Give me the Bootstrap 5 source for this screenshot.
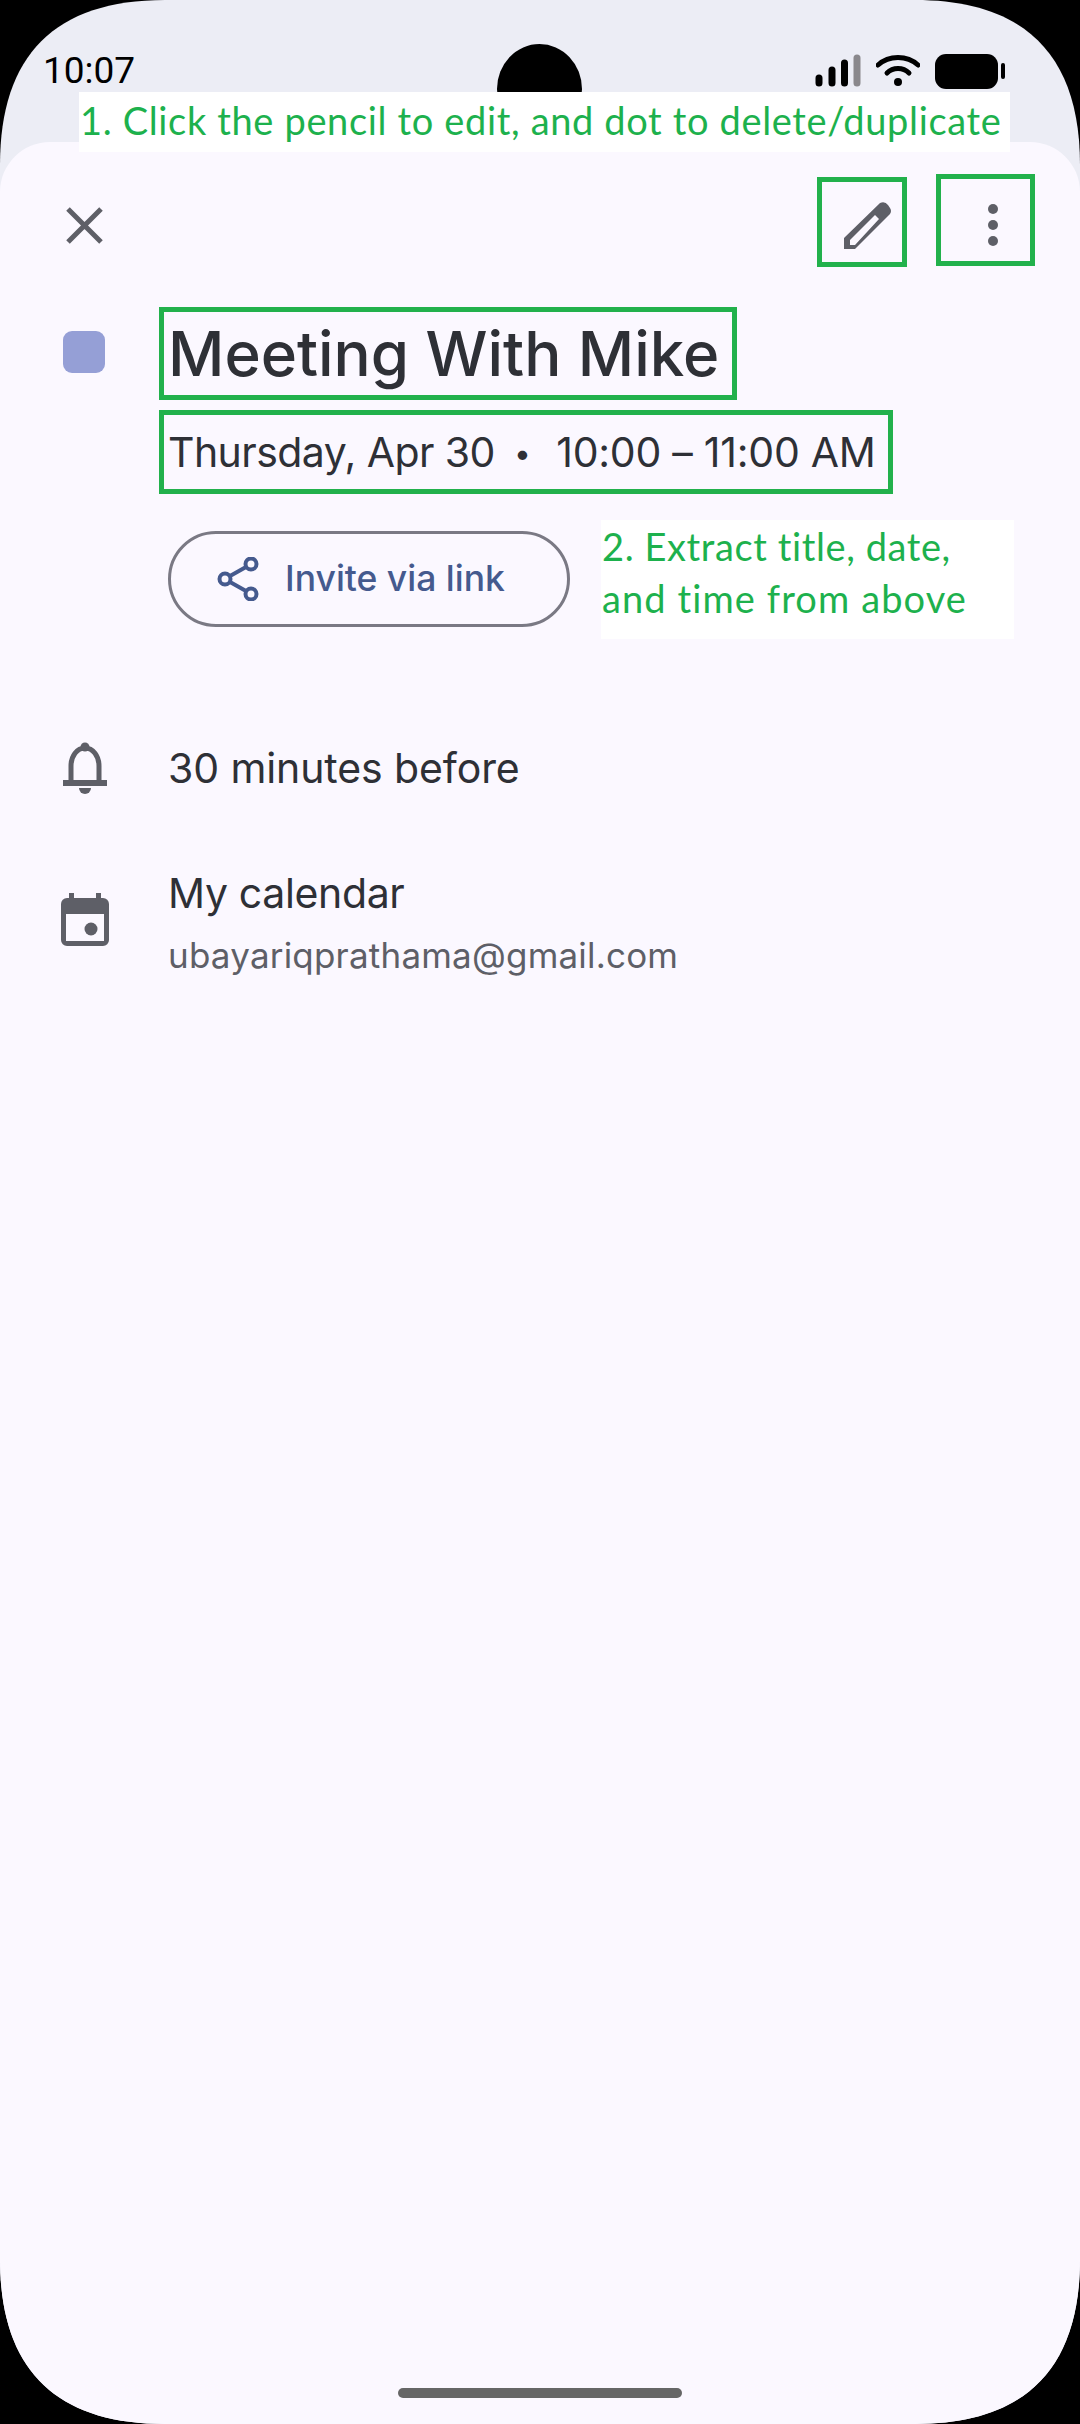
<!DOCTYPE html>
<html lang="en"><head><meta charset="utf-8"><title>Event details</title>
<link href="https://cdn.jsdelivr.net/npm/bootstrap@5.3.0/dist/css/bootstrap.min.css" rel="stylesheet">
<style>
html,body{margin:0;background:#000;width:1080px;height:2424px;overflow:hidden}
.phone{width:1080px;height:2424px;background:#ecedf5;clip-path:path("M165 0H915C1025 0 1080 55 1080 165V2259C1080 2369 1025 2424 915 2424H165C55 2424 0 2369 0 2259V165C0 55 55 0 165 0Z");overflow:hidden;position:relative;font-family:Inter,"Noto Sans",sans-serif;color:#2e3036}
.statusbar{height:142px;padding:0 75px 0 43px}
.clock{font-family:Roboto,sans-serif;font-size:37px;line-height:1;color:#000;margin-top:52px}
.cam{position:absolute;left:497px;top:44px;width:85px;height:90px;border-radius:50%;background:#000}
.stat-icons{margin-top:54px;gap:15px}
.note{position:absolute;background:#fff;color:#1db14d;font-family:Lato,sans-serif;white-space:nowrap}
.note-top{left:79px;top:92px;width:931px;height:60px;font-size:38px;line-height:56px;padding-left:1px;letter-spacing:.65px}
.sheet{background:#fbf8ff;border-radius:50px 50px 0 0;height:2282px;position:relative}
.toolbar{padding:32px 45px 0 66px;height:125px}
.close-ic{margin-top:33px}
.gbox{border:5px solid #22b14c}
.pen-box{width:90px;height:90px;margin-top:3px;padding:8px 0 0 11px}
.dots-box{width:99px;height:92px;margin-left:29px;padding:10px 0 0 15px}
.color-sq{width:42px;height:42px;background:#959fd6;border-radius:9px;margin:64px 54px 0 63px}
.title-box{width:578px;height:93px;margin-top:40px;padding-left:4px;font-size:61.8px;font-weight:500;line-height:83px;white-space:nowrap}
.date-box{width:734px;height:84px;margin:10px 0 0 159px;padding-left:4px;font-size:41px;line-height:74px;white-space:nowrap;letter-spacing:-.55px}
.sep{font-size:30px;margin:0 26px 0 19px;position:relative;top:-3px}
.time-part{letter-spacing:-.25px}
.actions{margin:26px 0 0 168px;gap:31px}
.invite{width:402px;height:96px;border:3px solid #7a7984;border-radius:48px;padding-left:46px;gap:26px;color:#455a8e;font-size:35.500px;font-weight:500;white-space:nowrap;margin-bottom:2px}
.note-side{position:static;width:413px;height:119px;font-size:38px;line-height:52px;padding:0 0 0 1px;letter-spacing:.6px}
.line-two{letter-spacing:1.1px}
.detail-row{padding-left:61px}
.row-bell{margin-top:103px}
.row-cal{margin-top:79px}
.cal-ic{margin-top:20px}
.ic{flex:none;width:48px}
.det-main{font-size:41px;line-height:40px;white-space:nowrap;margin-left:59px;letter-spacing:-.1px}
.det-cal{letter-spacing:-.35px}
.det-sub{font-size:35px;line-height:1;color:#5e5f67;margin-top:25px;white-space:nowrap;letter-spacing:.2px}
.home-bar{position:absolute;left:398px;top:2388px;width:284px;height:10px;background:#666;border-radius:5px}
</style></head>
<body>
<div class="phone">
  <div class="statusbar d-flex justify-content-between align-items-start">
    <div class="clock">10:07</div>
    <div class="stat-icons d-flex align-items-start">
      <svg width="46" height="34" viewBox="0 0 46 34"><g stroke-width="7" stroke-linecap="round"><path d="M4 24V29M17 16V29M29.500 9V29" stroke="#000"/><path d="M42 4V29" stroke="#8a888c"/></g></svg>
      <svg width="44" height="34" viewBox="0 0 44 34" fill="none" stroke="#000" stroke-linecap="round"><path d="M2 11C13 1 31 1 42 11" stroke-width="5"/><path d="M11 19C17 13 27 13 33 19" stroke-width="5"/><circle cx="22" cy="28" r="4" fill="#000" stroke="none"/></svg>
      <svg width="70" height="35" viewBox="0 0 70 35"><rect x="0" y="0" width="63" height="35" rx="11" fill="#000"/><rect x="66" y="9" width="4" height="16" rx="2" fill="#000"/></svg>
    </div>
  </div>
  <div class="cam"></div>
  <div class="sheet">
    <div class="toolbar d-flex align-items-start">
      <svg class="close-ic" width="37" height="37" viewBox="0 0 37 37" stroke="#5e5f67" stroke-width="5"><path d="M2 2 35 35M35 2 2 35"/></svg>
      <div class="ms-auto gbox pen-box d-flex align-items-center justify-content-center">
        <svg width="49" height="48" viewBox="843 202 49 48"><path fill="#5e5f67" fill-rule="evenodd" d="M844 238 880 203Q885 201 888 205L890 208Q892 211 890 214L855 249H844ZM850 240V245H855L879 219 875 215Z"/></svg>
      </div>
      <div class="gbox dots-box d-flex align-items-center justify-content-center">
        <svg width="10" height="42" viewBox="0 0 10 42" fill="#5e5f67"><circle cx="5" cy="5" r="5"/><circle cx="5" cy="21" r="5"/><circle cx="5" cy="37" r="5"/></svg>
      </div>
    </div>
    <div class="d-flex">
      <div class="color-sq"></div>
      <div class="gbox title-box">Meeting With Mike</div>
    </div>
    <div class="gbox date-box">Thursday, Apr 30<span class="sep">•</span><span class="time-part">10:00 – 11:00 AM</span></div>
    <div class="actions d-flex align-items-center">
      <div class="invite d-flex align-items-center">
        <svg width="42" height="44" viewBox="0 0 42 44" fill="none" stroke="#455a8e" stroke-width="4"><circle cx="8" cy="22" r="5.500"/><circle cx="34" cy="7" r="5.500"/><circle cx="34" cy="37" r="5.500"/><path d="M13 19 29 10M13 25 29 34"/></svg>
        <span>Invite via link</span>
      </div>
      <div class="note note-side">2. Extract title, date,<br><span class="line-two">and time from above</span></div>
    </div>
    <div class="detail-row row-bell d-flex align-items-center">
      <svg class="ic" height="52" viewBox="0 0 48 52" fill="#5e5f67"><circle cx="24" cy="5" r="4.500"/><path d="M10 41V24C10 14 16 6 24 6S38 14 38 24V41" fill="none" stroke="#5e5f67" stroke-width="5"/><rect x="2" y="38" width="44" height="6"/><path d="M18 46H30A6 6 0 0 1 18 46Z"/></svg>
      <div class="det-main">30 minutes before</div>
    </div>
    <div class="detail-row row-cal d-flex align-items-start">
      <svg class="ic cal-ic" height="53" viewBox="0 0 48 53"><path fill="#5e5f67" d="M8 0H13V5H35V0H40V5H42A6 6 0 0 1 48 11V47A6 6 0 0 1 42 53H6A6 6 0 0 1 0 47V11A6 6 0 0 1 6 5H8Z"/><rect x="5" y="21" width="38" height="27" fill="#fbf8ff"/><circle cx="30" cy="36" r="6.500" fill="#5e5f67"/></svg>
      <div class="det-main"><span class="det-cal">My calendar</span><div class="det-sub">ubayariqprathama@gmail.com</div></div>
    </div>
  </div>
  <div class="note note-top">1. Click the pencil to edit, and dot to delete/duplicate</div>
  <div class="home-bar"></div>
</div>
<script src="https://cdn.jsdelivr.net/npm/bootstrap@5.3.0/dist/js/bootstrap.bundle.min.js"></script>
</body></html>
